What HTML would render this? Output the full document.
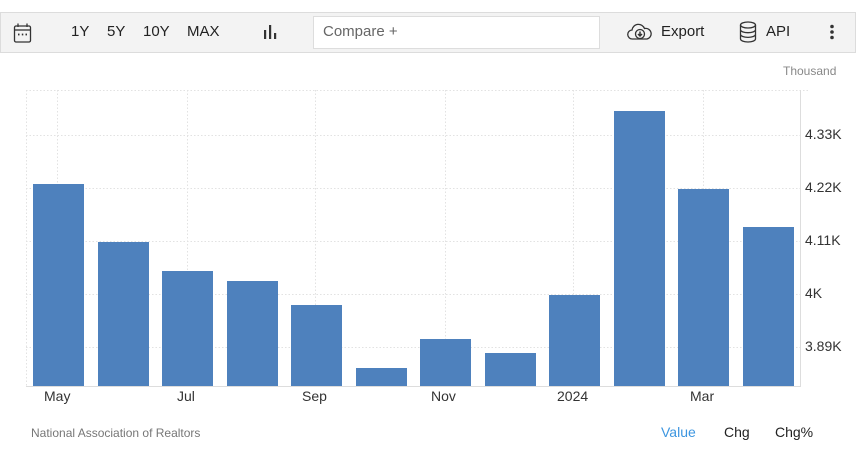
<!DOCTYPE html>
<html><head><style>
body{margin:0;width:856px;height:459px;background:#fff;font-family:"Liberation Sans",Arial,sans-serif;position:relative;overflow:hidden}
.tb{position:absolute;left:0;top:12px;width:854px;height:39px;background:#f3f3f3;border:1px solid #dcdcdc}
.t{position:absolute;font-size:15px;color:#222;top:23px}
.ax{position:absolute;font-size:14px;color:#333}
.bar{position:absolute;background:#4e81bd;width:51px}
</style></head><body>
<div class="tb"></div>
<svg style="position:absolute;left:13px;top:22px" width="20" height="22" viewBox="0 0 20 22" fill="none" stroke="#333" stroke-width="1.3"><rect x="1.5" y="4" width="16" height="16" rx="1.5"/><line x1="1.5" y1="8" x2="17.5" y2="8"/><line x1="5" y1="1.5" x2="5" y2="5"/><line x1="14" y1="1.5" x2="14" y2="5"/><g stroke-width="1.8"><line x1="5" y1="12.5" x2="6.5" y2="12.5"/><line x1="8.8" y1="12.5" x2="10.3" y2="12.5"/><line x1="12.5" y1="12.5" x2="14" y2="12.5"/></g></svg>
<div class="t" style="left:71px">1Y</div>
<div class="t" style="left:107px">5Y</div>
<div class="t" style="left:143px">10Y</div>
<div class="t" style="left:187px">MAX</div>
<svg style="position:absolute;left:263px;top:24px" width="16" height="16"><g fill="#333"><rect x="1" y="6" width="2.2" height="9"/><rect x="6" y="1" width="2.2" height="14"/><rect x="11" y="9" width="2.2" height="6"/></g></svg>
<div style="position:absolute;left:313px;top:16px;width:285px;height:31px;background:#fff;border:1px solid #ddd"></div>
<div class="t" style="left:323px;color:#666">Compare +</div>
<svg style="position:absolute;left:627px;top:22px" width="26" height="20" viewBox="0 0 26 20" fill="none" stroke="#333" stroke-width="1.3"><path d="M7 17H5.5A4.5 4.5 0 0 1 5 8 6.5 6.5 0 0 1 17.5 6.5 5 5 0 0 1 20 17H7Z"/><circle cx="13" cy="12" r="4.5"/><path d="M13 9.5v4M11 12l2 2 2-2" stroke-width="1.5"/></svg>
<div class="t" style="left:661px">Export</div>
<svg style="position:absolute;left:739px;top:21px" width="18" height="22" viewBox="0 0 18 22" fill="none" stroke="#333" stroke-width="1.3"><ellipse cx="9" cy="4" rx="7.5" ry="3"/><path d="M1.5 4v14c0 1.7 3.4 3 7.5 3s7.5-1.3 7.5-3V4M1.5 8.7c0 1.7 3.4 3 7.5 3s7.5-1.3 7.5-3M1.5 13.4c0 1.7 3.4 3 7.5 3s7.5-1.3 7.5-3"/></svg>
<div class="t" style="left:766px">API</div>
<svg style="position:absolute;left:829px;top:24px" width="6" height="16"><g fill="#333"><circle cx="3" cy="2.5" r="1.8"/><circle cx="3" cy="8" r="1.8"/><circle cx="3" cy="13.5" r="1.8"/></g></svg>
<div style="position:absolute;left:783px;top:64px;font-size:12px;color:#888">Thousand</div>
<svg style="position:absolute;left:0;top:0" width="856" height="459">
<g stroke="#e2e2e2" stroke-dasharray="1.5,2" stroke-width="1">
<line x1="26" y1="90.5" x2="810" y2="90.5"/>
<line x1="26" y1="135.5" x2="800" y2="135.5"/>
<line x1="26" y1="188.5" x2="800" y2="188.5"/>
<line x1="26" y1="241.5" x2="800" y2="241.5"/>
<line x1="26" y1="294.5" x2="800" y2="294.5"/>
<line x1="26" y1="347.5" x2="800" y2="347.5"/>
<line x1="57.5" y1="90" x2="57.5" y2="386"/>
<line x1="187.5" y1="90" x2="187.5" y2="386"/>
<line x1="315.5" y1="90" x2="315.5" y2="386"/>
<line x1="445.5" y1="90" x2="445.5" y2="386"/>
<line x1="573.5" y1="90" x2="573.5" y2="386"/>
<line x1="703.5" y1="90" x2="703.5" y2="386"/>
<line x1="26.5" y1="90" x2="26.5" y2="386"/>
</g>
<line x1="800.5" y1="90" x2="800.5" y2="387" stroke="#ddd"/>
<line x1="26" y1="386.5" x2="800" y2="386.5" stroke="#ddd"/>
</svg>
<div class="bar" style="left:33px;top:184px;height:202px"></div>
<div class="bar" style="left:98px;top:242px;height:144px"></div>
<div class="bar" style="left:162px;top:271px;height:115px"></div>
<div class="bar" style="left:227px;top:281px;height:105px"></div>
<div class="bar" style="left:291px;top:305px;height:81px"></div>
<div class="bar" style="left:356px;top:368px;height:18px"></div>
<div class="bar" style="left:420px;top:339px;height:47px"></div>
<div class="bar" style="left:485px;top:353px;height:33px"></div>
<div class="bar" style="left:549px;top:295px;height:91px"></div>
<div class="bar" style="left:614px;top:111px;height:275px"></div>
<div class="bar" style="left:678px;top:189px;height:197px"></div>
<div class="bar" style="left:743px;top:227px;height:159px"></div>
<div class="ax" style="left:805px;top:126px">4.33K</div>
<div class="ax" style="left:805px;top:179px">4.22K</div>
<div class="ax" style="left:805px;top:232px">4.11K</div>
<div class="ax" style="left:805px;top:285px">4K</div>
<div class="ax" style="left:805px;top:338px">3.89K</div>
<div class="ax" style="left:44px;top:388px">May</div>
<div class="ax" style="left:177px;top:388px">Jul</div>
<div class="ax" style="left:302px;top:388px">Sep</div>
<div class="ax" style="left:431px;top:388px">Nov</div>
<div class="ax" style="left:557px;top:388px">2024</div>
<div class="ax" style="left:690px;top:388px">Mar</div>
<div style="position:absolute;left:31px;top:426px;font-size:12px;color:#777">National Association of Realtors</div>
<div class="ax" style="left:661px;top:424px;color:#3d96e0">Value</div>
<div class="ax" style="left:724px;top:424px;color:#222">Chg</div>
<div class="ax" style="left:775px;top:424px;color:#222">Chg%</div>
</body></html>
